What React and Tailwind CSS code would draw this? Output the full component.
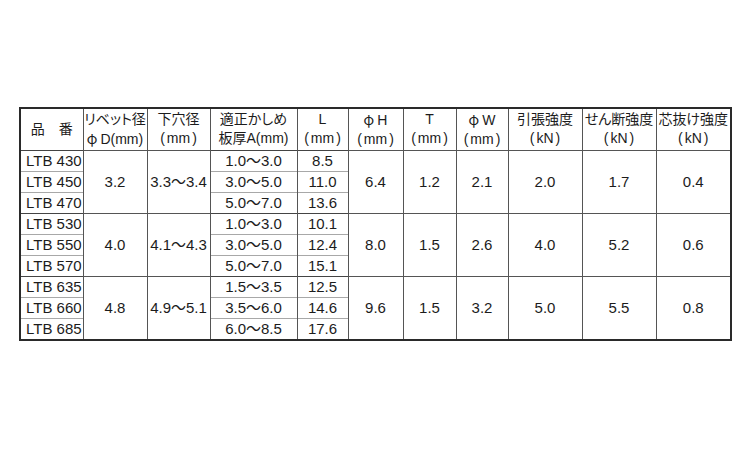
import React from 'react';

const widths = ['w-[63px]', 'w-[64px]', 'w-[63px]', 'w-[87px]', 'w-[51px]', 'w-[55px]', 'w-[53px]', 'w-[52px]', 'w-[74px]', 'w-[74px]', 'w-[75px]'];

const Phi = () => <span className="font-['Noto_Sans_CJK_JP'] mr-[3px]">φ</span>;
const Unit = ({ u }) => (
  <>
    (<span className="mx-[2px]">{u}</span>)
  </>
);

const headers = [
  [<span key="a">品　番</span>, null],
  ['リベット径', <><Phi />D(mm)</>],
  ['下穴径', <Unit u="mm" />],
  ['適正かしめ', '板厚A(mm)'],
  ['L', <Unit u="mm" />],
  [<><Phi />H</>, <Unit u="mm" />],
  ['T', <Unit u="mm" />],
  [<><Phi />W</>, <Unit u="mm" />],
  ['引張強度', <Unit u="kN" />],
  ['せん断強度', <Unit u="kN" />],
  ['芯抜け強度', <Unit u="kN" />],
];

const groups = [
  {
    d: '3.2', hole: '3.3～3.4', h: '6.4', t: '1.2', w: '2.1', tensile: '2.0', shear: '1.7', pull: '0.4',
    rows: [['LTB 430', '1.0～3.0', '8.5'], ['LTB 450', '3.0～5.0', '11.0'], ['LTB 470', '5.0～7.0', '13.6']],
  },
  {
    d: '4.0', hole: '4.1～4.3', h: '8.0', t: '1.5', w: '2.6', tensile: '4.0', shear: '5.2', pull: '0.6',
    rows: [['LTB 530', '1.0～3.0', '10.1'], ['LTB 550', '3.0～5.0', '12.4'], ['LTB 570', '5.0～7.0', '15.1']],
  },
  {
    d: '4.8', hole: '4.9～5.1', h: '9.6', t: '1.5', w: '3.2', tensile: '5.0', shear: '5.5', pull: '0.8',
    rows: [['LTB 635', '1.5～3.5', '12.5'], ['LTB 660', '3.5～6.0', '14.6'], ['LTB 685', '6.0～8.5', '17.6']],
  },
];

export default function App() {
  return (
    <div className="w-[750px] h-[450px] bg-white pt-[107px] pl-[19px] font-['Liberation_Sans','Noto_Sans_CJK_JP',sans-serif] text-[15px] text-[#1c1c1c]">
      <table className="table-fixed w-[711px] border-collapse border-2 border-[#2a2a2a]">
        <colgroup>
          {widths.map((w, i) => (
            <col key={i} className={w} />
          ))}
        </colgroup>
        <thead>
          <tr className="h-[42px]">
            {headers.map(([a, b], i) => (
              <th
                key={i}
                className={`p-0 font-normal text-center text-[14px] leading-[19px] whitespace-nowrap [font-feature-settings:'palt'] ${i > 0 ? 'border-l border-[#555]' : ''}`}
              >
                <div>{a}</div>
                {b && <div>{b}</div>}
              </th>
            ))}
          </tr>
        </thead>
        <tbody>
          {groups.map((g, gi) =>
            g.rows.map((r, ri) => {
              const top = ri === 0 ? 'border-t border-[#444]' : 'border-t border-[#a8a8a8]';
              const cell = 'p-0 leading-[20px] text-center whitespace-nowrap';
              const span = `${cell} border-l border-t border-[#555]`;
              return (
                <tr key={`${gi}-${ri}`} className="h-[20px]">
                  <td className={`p-0 pl-[5px] leading-[20px] text-left whitespace-nowrap ${top}`}>{r[0]}</td>
                  {ri === 0 && (
                    <>
                      <td rowSpan={3} className={span}>{g.d}</td>
                      <td rowSpan={3} className={span}>{g.hole}</td>
                    </>
                  )}
                  <td className={`${cell} border-l border-l-[#555] ${top}`}>{r[1]}</td>
                  <td className={`${cell} border-l border-l-[#555] ${top}`}>{r[2]}</td>
                  {ri === 0 && (
                    <>
                      <td rowSpan={3} className={span}>{g.h}</td>
                      <td rowSpan={3} className={span}>{g.t}</td>
                      <td rowSpan={3} className={span}>{g.w}</td>
                      <td rowSpan={3} className={span}>{g.tensile}</td>
                      <td rowSpan={3} className={span}>{g.shear}</td>
                      <td rowSpan={3} className={span}>{g.pull}</td>
                    </>
                  )}
                </tr>
              );
            })
          )}
        </tbody>
      </table>
    </div>
  );
}
